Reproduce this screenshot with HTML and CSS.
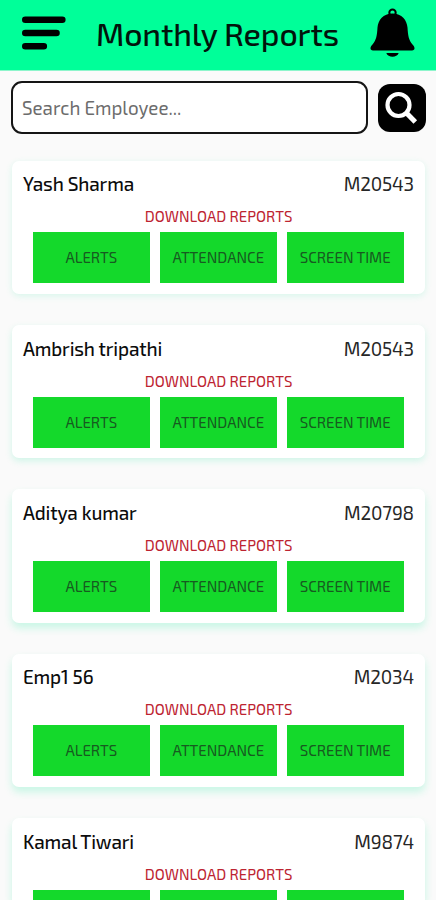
FILE: index.html
```html
<!DOCTYPE html>
<html lang="en">
<head>
<meta charset="utf-8">
<title>Monthly Reports</title>
<link rel="stylesheet" href="styles.css">
</head>
<body>
<header class="header">
  <svg class="menu" viewBox="0 0 44 34" width="44" height="34"><g stroke="#000" stroke-width="6.6" stroke-linecap="round"><path d="M3.3 3.8H40.3M3.3 17H34.5M3.3 30.3H21.8"/></g></svg>
  <h1 class="title">Monthly Reports</h1>
  <svg class="bell" viewBox="0 0 46 50" width="46" height="50"><circle cx="22.5" cy="4.7" r="3.2" fill="none" stroke="#000" stroke-width="2"/><path d="M22.5 5.5C13 5.5 8.2 12 7.5 19.500C7 27 6.500 32 2.500 36.500C-.5 39.500 0 42.500 3 42.500H42C45 42.500 45.500 39.500 42.500 36.500C38.500 32 38 27 37.500 19.500C36.800 12 32 5.500 22.500 5.500Z"/><path d="M16.300 45H28.700C27 50 18 50 16.300 45Z"/></svg>
</header>
<main>
  <div class="search">
    <div class="field">Search Employee...</div>
    <div class="go"><svg viewBox="0 0 48 48" width="48" height="48" fill="none" stroke="#fff"><circle cx="20.500" cy="21" r="11" stroke-width="4.200"/><path d="M28 28.500L37.300 38" stroke-width="5"/></svg></div>
  </div>
  <section class="card faint">
    <div class="top"><span class="name">Yash Sharma</span><span class="code">M20543</span></div>
    <div class="label">DOWNLOAD REPORTS</div>
    <div class="buttons"><div class="btn">ALERTS</div><div class="btn">ATTENDANCE</div><div class="btn">SCREEN TIME</div></div>
  </section>
  <section class="card soft">
    <div class="top"><span class="name">Ambrish tripathi</span><span class="code">M20543</span></div>
    <div class="label">DOWNLOAD REPORTS</div>
    <div class="buttons"><div class="btn">ALERTS</div><div class="btn">ATTENDANCE</div><div class="btn">SCREEN TIME</div></div>
  </section>
  <section class="card">
    <div class="top"><span class="name">Aditya kumar</span><span class="code">M20798</span></div>
    <div class="label">DOWNLOAD REPORTS</div>
    <div class="buttons"><div class="btn">ALERTS</div><div class="btn">ATTENDANCE</div><div class="btn">SCREEN TIME</div></div>
  </section>
  <section class="card">
    <div class="top"><span class="name">Emp1 56</span><span class="code">M2034</span></div>
    <div class="label">DOWNLOAD REPORTS</div>
    <div class="buttons"><div class="btn">ALERTS</div><div class="btn">ATTENDANCE</div><div class="btn">SCREEN TIME</div></div>
  </section>
  <section class="card last">
    <div class="top"><span class="name">Kamal Tiwari</span><span class="code">M9874</span></div>
    <div class="label">DOWNLOAD REPORTS</div>
    <div class="buttons"><div class="btn"></div><div class="btn"></div><div class="btn"></div></div>
  </section>
</main>
</body>
</html>
```
FILE: styles.css
```css
* { box-sizing: border-box; }
body {
  margin: 0;
  height: 900px;
  overflow: hidden;
  background: #fafafa;
  color: #0c0c0c;
  font-family: "Exo 2", Roboto, "Liberation Sans", sans-serif;
}
.header {
  display: flex;
  align-items: flex-start;
  height: 71px;
  padding: 0 20px 0 22px;
  background: #00ff99;
  border-bottom: 1px solid #8df5cb;
}
.menu { flex: none; margin-top: 16px; }
.title {
  flex: 1;
  margin: 13px 0 0 30px;
  font-size: 32px;
  line-height: 40px;
  font-weight: 500;
  letter-spacing: -0.12px;
  white-space: nowrap;
  color: #02140c;
}
.bell { flex: none; margin: 8px 0 0; }
.search {
  display: flex;
  align-items: center;
  justify-content: space-between;
  height: 53px;
  margin: 10px 10px 26.5px 11px;
}
.field {
  width: 357px;
  height: 53px;
  padding-left: 9px;
  border: 2px solid #151515;
  border-radius: 11px;
  background: #fff;
  color: #6c6c6c;
  font-size: 18.8px;
  line-height: 50px;
}
.go {
  width: 48px;
  height: 48px;
  border-radius: 12px;
  background: #000;
}
.go svg { display: block; }
.card {
  height: 133.4px;
  margin: 0 11px 31px 12px;
  padding: 11.800px 11px 0;
  border-radius: 7px;
  background: #fff;
  box-shadow: 0 5px 8px rgba(0, 235, 150, 0.2);
}
.faint { box-shadow: 0 2px 7px rgba(0, 225, 150, 0.14); }
.soft { box-shadow: 0 3px 7px rgba(0, 225, 150, 0.17); }
.last { height: 82px; margin-bottom: 0; border-radius: 7px 7px 0 0; overflow: hidden; }
.top {
  display: flex;
  justify-content: space-between;
  height: 34px;
  font-size: 19px;
  line-height: 24px;
}
.name { font-weight: 500; letter-spacing: -0.15px; }
.code { color: #262626; letter-spacing: -0.15px; }
.label {
  height: 26px;
  color: #bd2331;
  font-size: 15px;
  line-height: 21px;
  text-align: center;
}
.buttons {
  display: grid;
  grid-template-columns: repeat(3, 1fr);
  gap: 10.500px;
  margin: 0 10.500px 0 10px;
}
.btn {
  height: 51px;
  background: #14d92b;
  color: #175a20;
  font-size: 15px;
  line-height: 51px;
  text-align: center;
  white-space: nowrap;
}
```
